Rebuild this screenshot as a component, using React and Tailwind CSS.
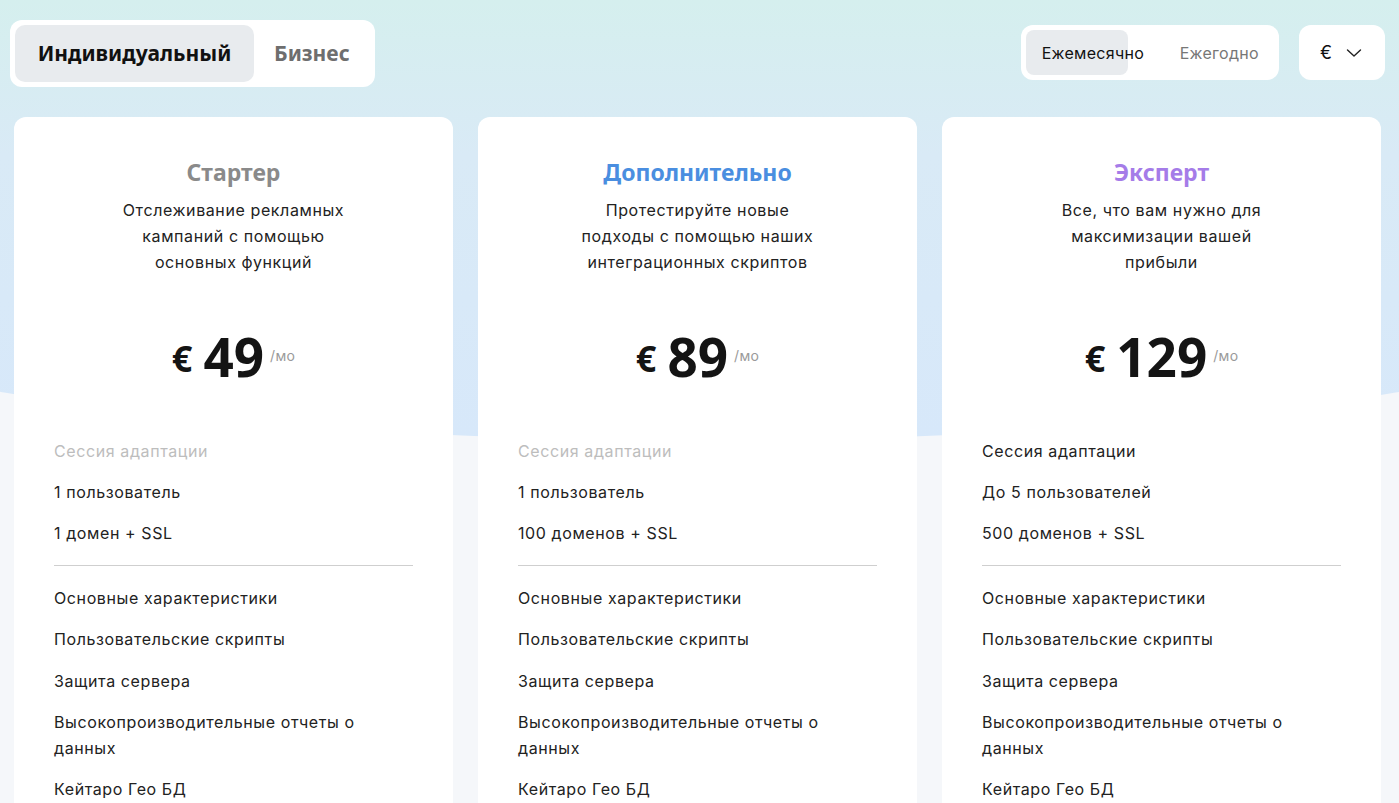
import React from "react";

const plans = [
  {
    title: "Стартер",
    color: "text-[#8a8a8a]",
    desc: ["Отслеживание рекламных", "кампаний с помощью", "основных функций"],
    price: "49",
    muted: true,
    top: ["Сессия адаптации", "1 пользователь", "1 домен + SSL"],
  },
  {
    title: "Дополнительно",
    color: "text-[#4a8ee0]",
    desc: ["Протестируйте новые", "подходы с помощью наших", "интеграционных скриптов"],
    price: "89",
    muted: true,
    top: ["Сессия адаптации", "1 пользователь", "100 доменов + SSL"],
  },
  {
    title: "Эксперт",
    color: "text-[#a57ce8]",
    desc: ["Все, что вам нужно для", "максимизации вашей", "прибыли"],
    price: "129",
    muted: false,
    top: ["Сессия адаптации", "До 5 пользователей", "500 доменов + SSL"],
  },
];

const bottom = [
  "Основные характеристики",
  "Пользовательские скрипты",
  "Защита сервера",
  "Высокопроизводительные отчеты о данных",
  "Кейтаро Гео БД",
];

function Card({ p }) {
  return (
    <div className="bg-white rounded-t-[12px] h-[720px] pt-10 px-10">
      <h2
        className={`text-center font-bold text-[23px] leading-[30px] ${p.color} font-['Noto_Sans',sans-serif]`}
      >
        {p.title}
      </h2>
      <p className="mt-[10px] text-center text-[16px] leading-[26px] tracking-[0.6px] text-[#222] font-['Inter',sans-serif]">
        {p.desc.map((l, i) => (
          <span key={i} className="block">
            {l}
          </span>
        ))}
      </p>
      <div className="mt-[52px] flex items-center justify-center h-[60px] font-['Noto_Sans',sans-serif] text-[#141414]">
        <span className="text-[36px] font-bold leading-none mt-[3px]">€</span>
        <span className="ml-[11px] text-[53px] font-bold leading-[60px]">{p.price}</span>
        <span className="ml-[6px] mb-[3px] text-[14px] tracking-[0.3px] text-[#9a9a9a] font-['Inter',sans-serif]">
          /мо
        </span>
      </div>
      <div className="mt-[51px] font-['Inter',sans-serif] text-[16px] leading-[26px] tracking-[0.6px] text-[#222]">
        <ul className="flex flex-col gap-[15px]">
          {p.top.map((t, i) => (
            <li key={i} className={i === 0 && p.muted ? "text-[#bdbdbd]" : ""}>
              {t}
            </li>
          ))}
        </ul>
        <div className="my-[19px] h-px bg-[#cfcfcf]" />
        <ul className="flex flex-col gap-[15.3px]">
          {bottom.map((t, i) => (
            <li key={i} className="max-w-[320px]">
              {t}
            </li>
          ))}
        </ul>
      </div>
    </div>
  );
}

export default function App() {
  return (
    <div className="relative w-[1399px] h-[803px] overflow-hidden bg-[#f5f7fa]">
      <div className="absolute top-0 left-[-200px] w-[1800px] h-[440px] rounded-bl-[900px_130px] rounded-br-[900px_130px] bg-[linear-gradient(180deg,#d5efee_0%,#d9eaf6_35%,#d7e8fa_100%)]" />
      <div className="relative">
        <div className="flex items-start justify-between pl-[10px] pr-[14px] pt-[20px]">
          <div className="flex items-center bg-white rounded-[12px] p-[5px] h-[67px]">
            <button className="h-[57px] w-[239px] rounded-[10px] bg-[#e8ebee] text-[21px] font-bold text-[#111] font-['Noto_Sans',sans-serif]">
              Индивидуальный
            </button>
            <button className="h-[57px] pl-[20px] pr-[20px] text-[21px] font-bold text-[#6e6e6e] font-['Noto_Sans',sans-serif]">
              Бизнес
            </button>
          </div>
          <div className="flex items-center gap-5 mt-[5px]">
            <div className="flex items-center bg-white rounded-[12px] p-[5px] h-[55px] font-['Inter',sans-serif] text-[16px] tracking-[0.3px]">
              <button className="h-[45px] w-[102px] pl-[16px] rounded-[8px] bg-[#e8ebee] text-left text-[#111] whitespace-nowrap overflow-visible">
                Ежемесячно
              </button>
              <button className="h-[45px] pl-[52px] pr-[15px] text-[#777] whitespace-nowrap">
                Ежегодно
              </button>
            </div>
            <button className="flex items-center bg-white rounded-[12px] h-[55px] w-[86px] pl-[21px] font-['Inter',sans-serif] text-[18px] text-[#111]">
              <span>€</span>
              <svg
                className="ml-[14px]"
                width="16"
                height="10"
                viewBox="0 0 16 10"
                fill="none"
                stroke="#222"
                strokeWidth="1.4"
                strokeLinecap="round"
                strokeLinejoin="round"
              >
                <polyline points="1.5,2 8,8 14.5,2" />
              </svg>
            </button>
          </div>
        </div>
        <div className="mt-[30px] pl-[14px] grid grid-cols-[439px_439px_439px] gap-[25px]">
          {plans.map((p, i) => (
            <Card key={i} p={p} />
          ))}
        </div>
      </div>
    </div>
  );
}
